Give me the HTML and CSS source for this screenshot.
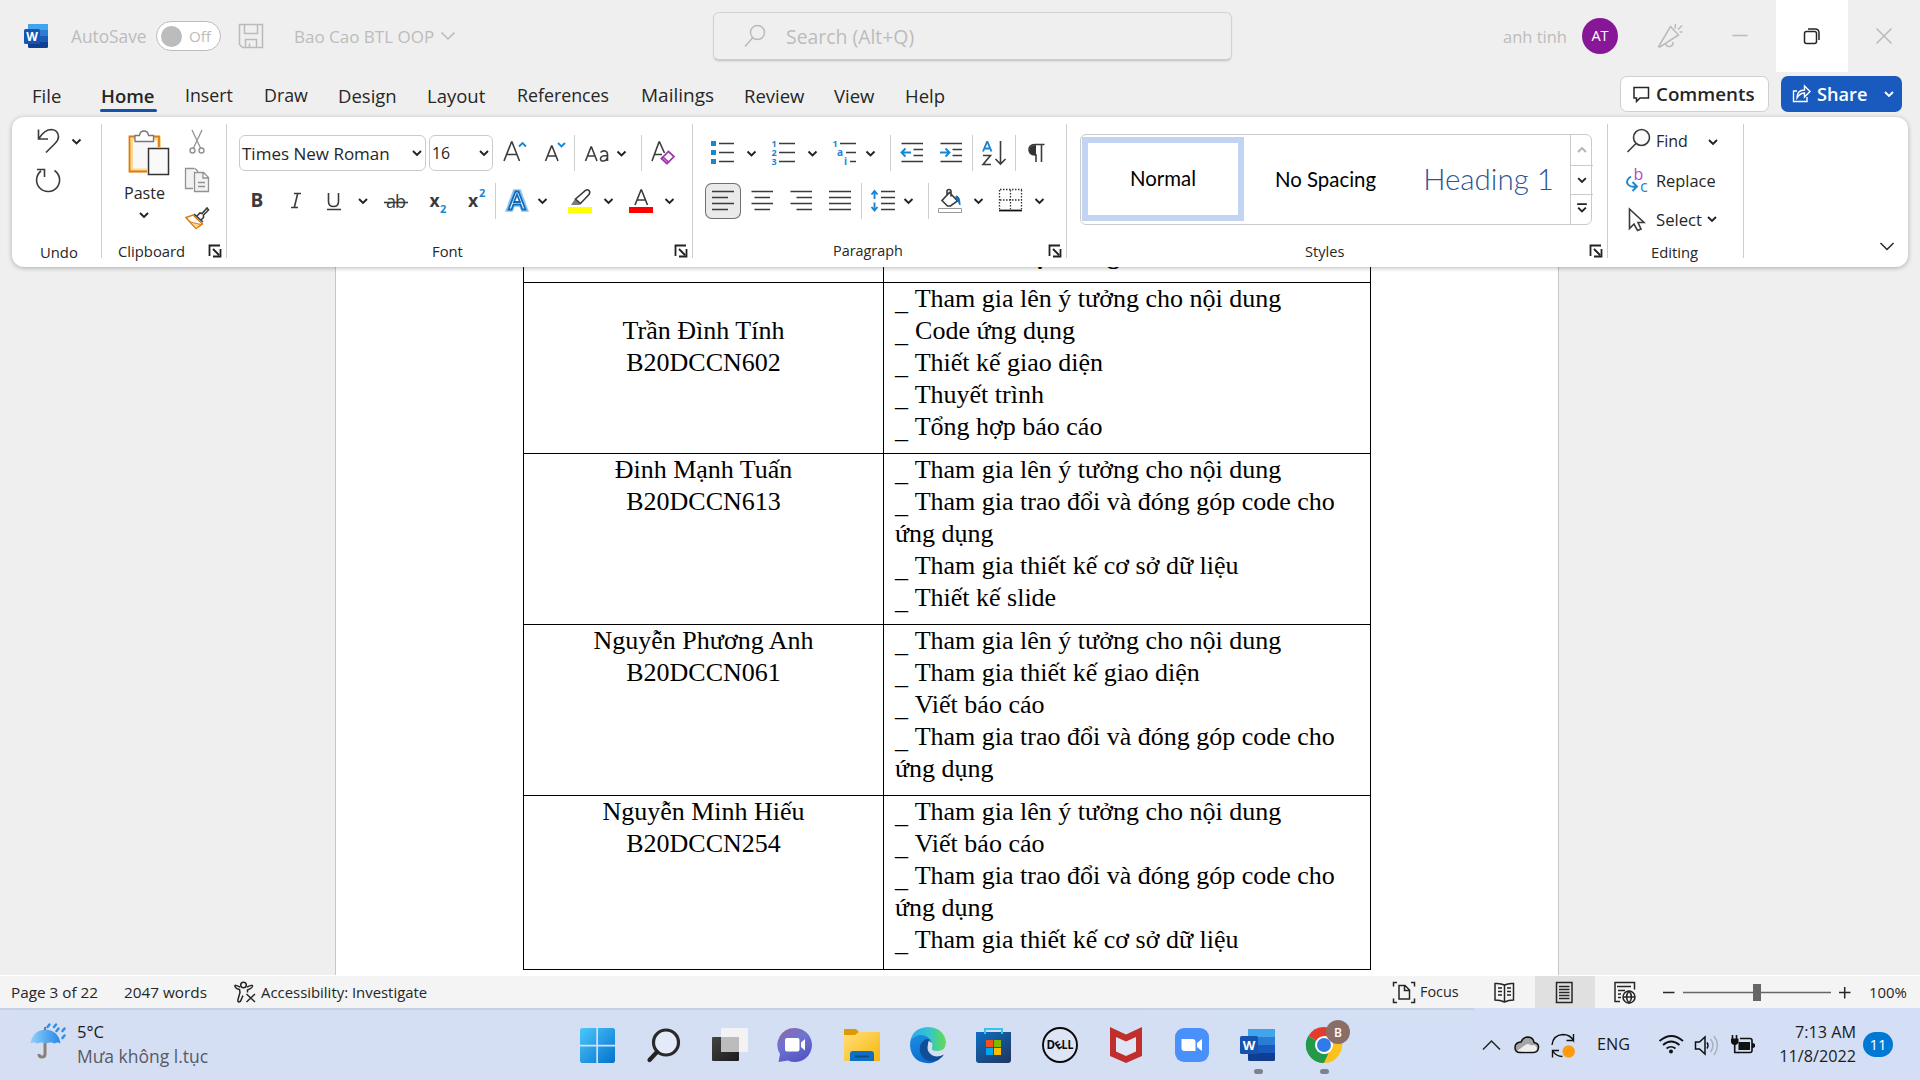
FILE: index.html
```html
<!DOCTYPE html>
<html lang="en">
<head>
<meta charset="utf-8">
<title>Bao Cao BTL OOP - Word</title>
<link rel="stylesheet" href="styles.css">
</head>
<body>
<header class="titlebar">
  <svg class="ico" width="24" height="24" viewBox="0 0 24 24"><rect x="4" width="20" height="24" rx="1.5" fill="#103f91"/><path d="M4 1.5Q4 0 5.500 0H22.500Q24 0 24 1.500V6H4z" fill="#41a5ee"/><path d="M4 6h20v6H4z" fill="#2b7cd3"/><path d="M4 12h20v6H4z" fill="#185abd"/><rect y="5" width="16" height="15" rx="1.500" fill="#1755b4"/><text x="8" y="16.500" class="w-letter" font-size="12">W</text></svg>
  <span class="autosave">AutoSave</span>
  <span class="toggle"><i class="knob"></i>Off</span>
  <svg class="ico save" width="26" height="26" viewBox="238 23 26 26"><path d="M239.500 24.500h23v23h-20l-3-3zM244.500 24.500v9h13v-9M245.500 47.500v-8h11v8M249.500 47.500v-4" class="g"/></svg>
  <span class="filename">Bao Cao BTL OOP</span>
  <svg class="ico" width="18" height="12" viewBox="439 30 18 12"><path d="M441.500 32.500l6.500 6.500 6.500-6.500" class="g"/></svg>
  <div class="search">
    <svg class="ico" width="24" height="26" viewBox="744 23 24 26"><circle cx="757.500" cy="32.500" r="7" class="g"/><path d="M752.500 38L745 46.500" class="g"/></svg>
    <span>Search (Alt+Q)</span>
  </div>
  <span class="user">anh tinh</span>
  <span class="avatar">AT</span>
  <svg class="ico pen" width="28" height="28" viewBox="1656 22 28 28"><path d="M1659 46l11.500-19.500 8 8.500-18.500 12q-2.500 0-1-1zM1666 44q.5 3 4 2.500 3.500-1 3-4.500M1675 28.500l.5-4.500M1678 29.500l4-4M1679.500 32h3" class="g"/></svg>
  <div class="winbtns">
    <svg width="72" height="72" viewBox="1704 0 72 72"><path d="M1732.500 35.500h15" class="g"/></svg>
    <svg class="hot" width="72" height="72" viewBox="1776 0 72 72"><rect x="1804.500" y="31.500" width="12" height="12" rx="2" class="k2"/><path d="M1808 29h7q4 0 4 4v7" class="k2"/></svg>
    <svg width="72" height="72" viewBox="1848 0 72 72"><path d="M1876.500 28.500l15 15m0-15l-15 15" class="g"/></svg>
  </div>
</header>

<nav class="tabs">
  <div class="tablist">
    <span>File</span><span class="active">Home</span><span class="n">Insert</span><span class="n">Draw</span><span>Design</span><span>Layout</span><span class="n">References</span><span class="wd">Mailings</span><span>Review</span><span>View</span><span>Help</span>
  </div>
  <div class="btn comments"><svg width="18" height="18" viewBox="1632 84 18 18"><path d="M1634 86.500h14.500v10.500h-8.500l-3.500 3.500V97h-2.500z" class="k2"/></svg>Comments</div>
  <div class="btn share"><svg width="20" height="20" viewBox="1791 85 20 20"><path d="M1797 92h-3.500v10.500h13.500V98" class="w1"/><path d="M1797 99q0-8 7.500-8v-4l5.500 5.500-5.500 5.500v-4q-4.500 0-7.500 5z" class="w1"/></svg>Share<svg class="sc" width="12" height="12" viewBox="0 0 12 12"><path d="M2 4l4 4 4-4" class="w2"/></svg></div>
</nav>

<section class="ribbon">
  <div class="group undo">
    <div class="body">
      <svg width="60" height="40" viewBox="32 120 60 40"><path d="M38.500 129.500v9.500h9.500M38.500 139q6-9.500 13-9.500 6.500.5 7 7 0 3.500-3.500 7L46 152.500" class="k"/><path d="M72.500 139.500l4 4 4-4" class="c"/></svg>
      <svg width="60" height="40" viewBox="32 160 60 40"><path d="M37 169.500h7.500v7.500M41 171a11.500 11.500 0 1 0 13.500-.5" class="k"/></svg>
    </div>
    <div class="label"><span>Undo</span></div>
  </div>

  <div class="group clip">
    <div class="body">
      <div class="paste">
        <svg width="50" height="52" viewBox="124 126 50 52"><path d="M129.500 137.500h29v33h-29z" fill="#f8f8f8"/><path d="M131 138.500v32h16M132 138.500h27v9" fill="none" stroke="#fbd98f" stroke-width="4"/><path d="M147 171.500h-17.500v-35h6M154 136.500h5V147" fill="none" stroke="#e07a10" stroke-width="1.800"/><path d="M135 141.500v-6h4.500q.5-4.500 4.500-4.500t4.500 4.500h5v6z" fill="#fff" stroke="#777" stroke-width="1.300"/><path d="M148.500 148.500h20v26h-20z" fill="#f9f9f9" stroke="#333" stroke-width="1.500"/></svg>
        <span>Paste</span>
        <svg width="14" height="10" viewBox="137 210 14 10"><path d="M140 213l4 4 4-4" class="c"/></svg>
      </div>
      <div class="col">
        <svg width="30" height="36" viewBox="182 124 30 36"><path d="M192 130l9 19M202 130l-9 19" stroke="#929292" stroke-width="1.300" fill="none"/><circle cx="192.500" cy="150.500" r="2.500" class="gg"/><circle cx="201.500" cy="150.500" r="2.500" class="gg"/></svg>
        <svg width="30" height="39" viewBox="182 160 30 39"><path d="M193 188.500h-7.500v-20h9M195 168.500l3 3M194.500 172.500h9l5 5v14h-14zM203 173v5h5.500M198 182.500h7M198 186.500h7" fill="#f2f2f2" stroke="#929292" stroke-width="1.300"/></svg>
        <svg width="30" height="36" viewBox="182 199 30 36"><path d="M186 217.500l7-2.500 9.500 9-6.500 4.500z" fill="#fff" stroke="#e07a10" stroke-width="1.500"/><path d="M190 222l11 2.500-5 4z" fill="#fbd98f" stroke="#e07a10"/><path d="M194 214l9 8M197 216l3-3 2 .5 5-5.500 1.500 2-5 5v2.500l-3 3" class="k"/></svg>
      </div>
    </div>
    <div class="label"><span>Clipboard</span><svg class="launch" width="14" height="14" viewBox="0 0 14 14"><path d="M1.500 12V1.500H12M5 5l6 6M12.500 5v7.500H5" class="l"/></svg></div>
  </div>

  <div class="group font">
    <div class="body rows">
      <div class="row">
        <div class="combo face"><span>Times New Roman</span><svg width="14" height="10" viewBox="0 0 14 10"><path d="M3 3l4 4 4-4" class="c"/></svg></div>
        <div class="combo size"><span>16</span><svg width="14" height="10" viewBox="0 0 14 10"><path d="M3 3l4 4 4-4" class="c"/></svg></div>
        <svg width="42" height="36" viewBox="493 135 42 36"><path d="M504 161l7.500-19h.5l7.500 19M506.500 154.500h10.500" class="k"/><path d="M519 146.500l3.500-3.500 3.500 3.500" class="b"/></svg>
        <svg width="39" height="36" viewBox="535 135 39 36"><path d="M545.500 161l6-15h.5l6 15M547.500 156h8.500" class="k"/><path d="M558 143l3.500 3.500 3.500-3.500" class="b"/></svg>
        <i class="sep"></i>
        <svg width="66" height="36" viewBox="575 135 66 36"><path d="M585.500 161l5.500-14h.5l5.500 14M587.500 156h7.500M600.500 152.500q2-2 4.500-1.500 2.500.5 2.500 3.500v6.500M607.500 155.500q-7 0-7 3t3 2.500q4-.5 4-5" class="k"/><path d="M617.500 151.500l4 4 4-4" class="c"/></svg>
        <i class="sep"></i>
        <svg width="40" height="36" viewBox="642 135 40 36"><path d="M652 161l7-19h.5l5 11M654 154.500h8" class="k"/><path d="M661.500 158.500l7-7 5.500 5-7 7z" fill="#fff" stroke="#9b35a8" stroke-width="1.700"/><path d="M661.500 158.500l1.500-1.500 5.500 5-1.500 1.500z" fill="#d9a6df" stroke="#9b35a8" stroke-width="1.500"/></svg>
      </div>
      <div class="row">
        <svg width="36" height="36" viewBox="239 183 36 36"><text x="250.500" y="207" class="t bold" font-size="19">B</text></svg>
        <svg width="38" height="36" viewBox="275 183 38 36"><path d="M294 193.500h7M291 207.500h7M297.700 193.500l-3.400 14" class="k"/></svg>
        <svg width="64" height="36" viewBox="313 183 64 36"><path d="M328.500 193v8.500q0 5 5 5t5-5V193M327 209.500h14" class="k"/><path d="M359 199l4 4 4-4" class="c"/></svg>
        <svg width="43" height="36" viewBox="377 183 43 36"><text x="386" y="208" class="t" font-size="18" textLength="20">ab</text><path d="M384 202.500h24" class="k"/></svg>
        <svg width="38" height="36" viewBox="420 183 38 36"><text x="429.500" y="207" class="t bold" font-size="17.500">x</text><text x="440" y="213" class="t sub" font-size="11">2</text></svg>
        <svg width="37" height="36" viewBox="458 183 37 36"><text x="468" y="207" class="t bold" font-size="17.500">x</text><text x="479" y="197" class="t sub" font-size="11">2</text></svg>
        <i class="sep"></i>
        <svg width="62" height="36" viewBox="496 183 62 36"><path d="M507.500 210l7-19h5l7 19h-4l-2-5h-7l-2 5z" fill="none" stroke="#8ec5ef" stroke-width="3.500"/><path d="M508.500 209.500l7-18h3l7 18h-3l-2-5h-7l-2 5zM514 202h6l-3-7.500z" fill="#fff" stroke="#0f6cbd" stroke-width="1.800"/><path d="M538.500 199l4 4 4-4" class="c"/></svg>
        <svg width="62" height="36" viewBox="558 183 62 36"><path d="M568 207h24v6h-24z" fill="#ff0"/><path d="M571 205l4-6 6 5-2 1z" fill="#7a7a7a"/><path d="M575.500 199l10-8.500q2-1.500 3.500 0t0 4l-8.500 9z" class="k"/><path d="M604.500 199l4 4 4-4" class="c"/></svg>
        <svg width="62" height="36" viewBox="620 183 62 36"><path d="M629 207h24v6h-24z" fill="#f00"/><path d="M635 205l6-15h.5l6 15M637 200h8.500" class="k"/><path d="M665.500 199l4 4 4-4" class="c"/></svg>
      </div>
    </div>
    <div class="label"><span>Font</span><svg class="launch" width="14" height="14" viewBox="0 0 14 14"><path d="M1.500 12V1.500H12M5 5l6 6M12.500 5v7.500H5" class="l"/></svg></div>
  </div>

  <div class="group para">
    <div class="body rows">
      <div class="row">
        <svg width="60" height="36" viewBox="705 135 60 36"><path d="M711 141h5v5h-5zM711 150h5v5h-5zM711 159h5v5h-5z" fill="#1a86d0"/><path d="M719 143.500h15M719 152.500h15M719 161.500h15" class="k"/><path d="M747.500 151.500l4 4 4-4" class="c"/></svg>
        <svg width="61" height="36" viewBox="765 135 61 36"><text x="771.500" y="147" class="t sub" font-size="9">1</text><text x="771.500" y="156" class="t sub" font-size="9">2</text><text x="771.500" y="165" class="t sub" font-size="9">3</text><path d="M779 143.500h16M779 152.500h16M779 161.500h16" class="k"/><path d="M808.500 151.500l4 4 4-4" class="c"/></svg>
        <svg width="64" height="36" viewBox="826 135 64 36"><text x="832.500" y="147" class="t sub" font-size="9">1</text><text x="837" y="156" class="t sub" font-size="10">a</text><text x="844" y="165" class="t sub" font-size="10">i</text><path d="M840 143.500h16M846 152.500h10M850 161.500h6" class="k"/><path d="M866.500 151.500l4 4 4-4" class="c"/></svg>
        <i class="sep"></i>
        <svg width="40" height="36" viewBox="891 135 40 36"><path d="M901.500 143.500h21.500M913.500 149.500h9.500M913.500 155.500h9.500M901.500 161.500h21.500" class="k"/><path d="M911 152.500h-9M905.500 148.500l-4 4 4 4" class="b"/></svg>
        <svg width="41" height="36" viewBox="931 135 41 36"><path d="M940.500 143.500h21.500M952.500 149.500h9.500M952.500 155.500h9.500M940.500 161.500h21.500" class="k"/><path d="M940 152.500h9M945.500 148.500l4 4-4 4" class="b"/></svg>
        <i class="sep"></i>
        <svg width="42" height="36" viewBox="973 135 42 36"><path d="M983 151.500l4-9.500h.5l4 9.500M984.500 148.500h5.500" class="b"/><path d="M983 155.500h7.500l-7.500 9h8M1000.500 141v23M995.500 159l5 5 5-5" class="k"/></svg>
        <i class="sep"></i>
        <svg width="40" height="36" viewBox="1016 135 40 36"><path d="M1044.500 144.500h-9q-6.500 0-6.500 5t6 5.500h1v7M1041.500 144.500v17.500" class="k"/><path d="M1036 145v10q-6.500 0-6.500-5t6.500-5z" fill="#333"/></svg>
      </div>
      <div class="row">
        <svg class="on" width="36" height="36" viewBox="705 183 36 36"><path d="M712 191.500h22M712 197.500h16M712 203.500h22M712 209.500h16" class="k"/></svg>
        <svg width="40" height="36" viewBox="741 183 40 36"><path d="M751.500 191.500h21.500M754.500 197.500h15.500M751.500 203.500h21.500M754.500 209.500h15.500" class="k"/></svg>
        <svg width="39" height="36" viewBox="781 183 39 36"><path d="M790.500 191.500h21.500M796.500 197.500h15.500M790.500 203.500h21.500M796.500 209.500h15.500" class="k"/></svg>
        <svg width="41" height="36" viewBox="820 183 41 36"><path d="M829 191.500h22M829 197.500h22M829 203.500h22M829 209.500h22" class="k"/></svg>
        <i class="sep"></i>
        <svg width="66" height="36" viewBox="862 183 66 36"><path d="M881 191.500h14M881 197.500h14M881 203.500h14M881 209.500h14" class="k"/><path d="M874.500 191v8M871.500 194.500l3-3.500 3 3.500M874.500 202.500v8M871.500 207l3 3.500 3-3.500" class="b"/><path d="M904.500 199l4 4 4-4" class="c"/></svg>
        <i class="sep"></i>
        <svg width="62" height="36" viewBox="929 183 62 36"><path d="M949.500 192.500l8 8.500-7 5h-3l-5.500-5.500zM947 195v-3.500q0-2 2-2t2 2v5" class="k"/><path d="M956 196q4 0 4 9-2-5-4-6z" fill="#0f6cbd" stroke="#0f6cbd"/><path d="M938.500 208.500h23v4h-23z" fill="#fff" stroke="#999"/><path d="M974.500 199l4 4 4-4" class="c"/></svg>
        <svg width="65" height="36" viewBox="991 183 65 36"><path d="M999.500 190v19M1010.500 190v19M1021.500 190v19M1000 189.500h22M1000 200h22" fill="none" stroke="#333" stroke-width="1.300" stroke-dasharray="1.500 1.500"/><path d="M999 210.500h23" stroke="#111" stroke-width="1.800"/><path d="M1035.500 199l4 4 4-4" class="c"/></svg>
      </div>
    </div>
    <div class="label"><span>Paragraph</span><svg class="launch" width="14" height="14" viewBox="0 0 14 14"><path d="M1.500 12V1.500H12M5 5l6 6M12.500 5v7.500H5" class="l"/></svg></div>
  </div>

  <div class="group styles">
    <div class="body">
      <div class="gallery">
        <div class="style sel">Normal</div>
        <div class="style nosp">No Spacing</div>
        <div class="style head">Heading 1</div>
        <div class="scroll">
          <svg width="22" height="30" viewBox="0 0 22 30"><path d="M7 17l4-4 4 4" class="g3"/></svg>
          <svg width="22" height="29" viewBox="0 0 22 29"><path d="M7 12.500l4 4 4-4" class="c"/></svg>
          <svg width="22" height="29" viewBox="0 0 22 29"><path d="M6 9.500h10M7 13l4 4 4-4" class="c"/></svg>
        </div>
      </div>
    </div>
    <div class="label"><span>Styles</span><svg class="launch" width="14" height="14" viewBox="0 0 14 14"><path d="M1.500 12V1.500H12M5 5l6 6M12.500 5v7.500H5" class="l"/></svg></div>
  </div>

  <div class="group edit">
    <div class="body">
      <div class="cmd"><svg width="30" height="39" viewBox="1625 122 30 39"><circle cx="1641.500" cy="137.500" r="8" fill="#fafafa" stroke="#3b3b3b" stroke-width="1.600"/><path d="M1636 143.500l-8.500 8.500" class="k"/></svg><span class="find">Find</span><svg width="14" height="10" viewBox="0 0 14 10"><path d="M3 3l4 4 4-4" class="c"/></svg></div>
      <div class="cmd"><svg width="30" height="39" viewBox="1625 161 30 39"><text x="1633.500" y="180" class="t rb" font-size="16">b</text><text x="1640" y="192" class="t rc" font-size="16">c</text><path d="M1631 176.500q-6 4-3 8 2.500 3 8 2M1632.500 182l4.500 4.500-4.500 4.500" class="b"/></svg><span>Replace</span></div>
      <div class="cmd"><svg width="30" height="39" viewBox="1625 200 30 39"><path d="M1629.500 209v19.500l4.500-4.500 3.500 6.500 3.500-1.500-3-6.500h6z" class="k"/></svg><span class="select">Select</span><svg width="14" height="12" viewBox="0 0 14 12"><path d="M3 3l4 4 4-4" class="c"/></svg></div>
    </div>
    <div class="label"><span>Editing</span></div>
  </div>
  <svg class="collapse" width="20" height="14" viewBox="1876 239 20 14"><path d="M1879.500 243l6.500 6.500 6.500-6.500" class="k2"/></svg>
</section>

<main class="doc">
  <div class="page">
    <table class="work">
      <tr class="hd"><th><div></div></th><th><div><b>Nội dung</b></div></th></tr>
      <tr><td class="who"><br>Trần Đình Tính<br>B20DCCN602</td><td><u>_</u> Tham gia lên ý tưởng cho nội dung<br><u>_</u> Code ứng dụng<br><u>_</u> Thiết kế giao diện<br><u>_</u> Thuyết trình<br><u>_</u> Tổng hợp báo cáo</td></tr>
      <tr><td class="who">Đinh Mạnh Tuấn<br>B20DCCN613</td><td><u>_</u> Tham gia lên ý tưởng cho nội dung<br><u>_</u> Tham gia trao đổi và đóng góp code cho<br>ứng dụng<br><u>_</u> Tham gia thiết kế cơ sở dữ liệu<br><u>_</u> Thiết kế slide</td></tr>
      <tr><td class="who">Nguyễn Phương Anh<br>B20DCCN061</td><td><u>_</u> Tham gia lên ý tưởng cho nội dung<br><u>_</u> Tham gia thiết kế giao diện<br><u>_</u> Viết báo cáo<br><u>_</u> Tham gia trao đổi và đóng góp code cho<br>ứng dụng</td></tr>
      <tr class="last"><td class="who">Nguyễn Minh Hiếu<br>B20DCCN254</td><td><u>_</u> Tham gia lên ý tưởng cho nội dung<br><u>_</u> Viết báo cáo<br><u>_</u> Tham gia trao đổi và đóng góp code cho<br>ứng dụng<br><u>_</u> Tham gia thiết kế cơ sở dữ liệu</td></tr>
    </table>
  </div>
</main>

<footer class="status">
  <span class="pg">Page 3 of 22</span>
  <span class="words">2047 words</span>
  <svg width="26" height="26" viewBox="232 979 26 26"><circle cx="243.500" cy="985" r="2.800" class="k2"/><path d="M240 987q-6-3-5-.5t4.500 3l.5 3-2 7q-.5 2.500 1 2.500t2.500-3l1.500-3.500M247 987q6-3 5.500-.5-1 2-5 3.500v2.500M246.500 994l8.500 8M255 994l-8.500 8" class="k2"/></svg>
  <span class="acc">Accessibility: Investigate</span>
  <svg width="26" height="26" viewBox="1391 979 26 26"><path d="M1397 982.500h-3.500v4M1411 982.500h3.500v4M1397 1002.500h-3.500v-4M1411 1002.500h3.500v-4M1399 985.500h6l4.500 4.500v9h-10.500zM1404.500 985.500v5h5" class="k2"/></svg>
  <span class="focus">Focus</span>
  <div class="views">
    <svg width="60" height="32" viewBox="1475 976 60 32"><path d="M1504.500 985q-4-2-9.500-1.500v16.500q5.500 0 9.500 2 4-2 9-2v-16.500q-5-.5-9 1.500zM1504.500 985v17M1498 988h4M1498 991.500h4M1498 995h4M1507 988h4M1507 991.500h4M1507 995h4" class="k2"/></svg>
    <svg class="cur" width="60" height="32" viewBox="1535 976 60 32"><path d="M1556.500 982.500h15.500v20h-15.500zM1559 986.500h10.500M1559 989.500h10.500M1559 992.500h10.500M1559 995.500h10.500M1559 998.500h10.500" class="k2"/></svg>
    <svg width="60" height="32" viewBox="1595 976 60 32"><path d="M1620 1001.500h-5v-19h19.500v7M1617 986.500h14M1618 990.500h7M1618 994h3M1618 997.500h3" class="k2"/><circle cx="1629" cy="997" r="6" class="k2"/><path d="M1623 997h12M1629 991q-5 6 0 12 5-6 0-12" class="k2"/></svg>
  </div>
  <svg class="zoom" width="200" height="32" viewBox="1655 976 200 32"><path d="M1663 992.500h11.500M1839 992.500h11.500M1844.700 987v11.500" class="k2"/><path d="M1683 992.500h148" stroke="#666" stroke-width="1.700"/><path d="M1753 984h8v17h-8z" fill="#666"/></svg>
  <span class="pct">100%</span>
</footer>

<footer class="taskbar">
  <div class="weather">
    <svg width="38" height="40" viewBox="29 1025 38 40"><defs><linearGradient id="um"><stop stop-color="#8fd0fb"/><stop offset="1" stop-color="#2688e8"/></linearGradient></defs><path d="M45 1048v11q0 3-3 3t-3-3" fill="none" stroke="#8a8078" stroke-width="3"/><path d="M30.500 1048.500q2-13 15-14 13 1 15 14-3-2-6 0-3-2-9 0-5-2-8 0-4-2-7 0z" fill="url(#um)"/><path d="M45 1032v3" stroke="#777" stroke-width="2"/><path d="M47.500 1032l2-2.500M54 1032l2-2.500M56.500 1036l2-2.500M62.500 1036l2-2.500M62.500 1043l2-2.500" stroke="#2d8fe8" stroke-width="2.500" stroke-linecap="round"/></svg>
    <div><p class="temp">5°C</p><p class="desc">Mưa không l.tục</p></div>
  </div>
  <div class="apps">
    <svg width="66" height="72" viewBox="564 1008 66 72"><defs><linearGradient id="wi" x2="1" y2="1" gradientUnits="objectBoundingBox"><stop stop-color="#4cc8fb"/><stop offset="1" stop-color="#0471cd"/></linearGradient></defs><path d="M581.500 1028H596.300v16.800H580v-15.300zM598 1028h15.500l1.500 1.500v15.300h-17zM580 1046.500h16.300v16.500h-14.800l-1.500-1.500zM598 1046.500h17v15l-1.500 1.500H598z" fill="url(#wi)"/></svg>
    <svg width="66" height="72" viewBox="630 1008 66 72"><circle cx="666" cy="1042.500" r="12.500" fill="#e4eaf7" stroke="#2b2929" stroke-width="3.200"/><path d="M657 1052l-7.500 8" stroke="#222" stroke-width="4.200" stroke-linecap="round"/></svg>
    <svg width="66" height="72" viewBox="696 1008 66 72"><defs><linearGradient id="tv" x2="1" y2="1"><stop stop-color="#444"/><stop offset="1" stop-color="#1b1b1b"/></linearGradient></defs><rect x="712" y="1037" width="27" height="24" rx="1" fill="url(#tv)"/><rect x="721" y="1028" width="27" height="24" rx="1" fill="#f3f3f3"/><path d="M721 1037h18v15h-18z" fill="#bcbcbc"/></svg>
    <svg width="66" height="72" viewBox="762 1008 66 72"><defs><linearGradient id="ch" x1=".2" x2=".7" y2="1"><stop stop-color="#8a67ab"/><stop offset=".4" stop-color="#6f74d0"/><stop offset="1" stop-color="#5353c4"/></linearGradient></defs><path d="M795 1028a17 17 0 1 1-7 32.500l-9.500 1.500 1.500-8a17 17 0 0 1 15-26z" fill="url(#ch)"/><rect x="785" y="1038" width="14.500" height="13.500" rx="2" fill="#fff"/><path d="M801 1042.500l4-3.500v11.500l-4-3.500z" fill="#fff"/></svg>
    <svg width="66" height="72" viewBox="828 1008 66 72"><defs><linearGradient id="fo" x2="1" y2="1"><stop stop-color="#ffe07a"/><stop offset="1" stop-color="#f8b50c"/></linearGradient></defs><path d="M844 1030q0-1 1-1h11l3 3-4 5h-11z" fill="#dd9a05"/><path d="M844 1035h11l4-3h20q1 0 1 1v28h-36z" fill="url(#fo)"/><path d="M850 1061v-7q0-3 3-3h18q3 0 3 3v7z" fill="#0d70c4"/><path d="M855 1056.500h14" stroke="#0a4a86" stroke-width="1.800"/></svg>
    <svg width="66" height="72" viewBox="894 1008 66 72"><defs><linearGradient id="eg"><stop stop-color="#2fa9ee"/><stop offset=".5" stop-color="#32c3d4"/><stop offset="1" stop-color="#62dd4c"/></linearGradient><linearGradient id="eb" x2=".4" y2="1"><stop stop-color="#1b8fe0"/><stop offset="1" stop-color="#0a6bd0"/></linearGradient></defs><path d="M910 1044q1-16 18-17 16 1 18 15 0 9-9 9-6 0-5-3 2-6-4-8-9-5-18 4z" fill="url(#eg)"/><path d="M910 1045q0-8 9-10 9-1 13 8-6-5-9 2-1 8 3 12 6 5 13 2-5 5-13 4-15-2-16-18z" fill="url(#eb)"/><path d="M926 1039q-8 5-6 13 3 9 12 9.500 8-.5 12-7-8 4-13 0-5-4-3-10 0-4 2-5z" fill="#104f98"/></svg>
    <svg width="66" height="72" viewBox="960 1008 66 72"><defs><linearGradient id="st" x2=".8" y2="1"><stop stop-color="#0d6fc4"/><stop offset="1" stop-color="#1f3a66"/></linearGradient></defs><path d="M976 1032h35v28q0 3-3 3h-29q-3 0-3-3z" fill="url(#st)"/><path d="M985 1034v-5h17v5" fill="none" stroke="#33c4f5" stroke-width="2"/><path d="M986 1040h7v7h-7z" fill="#f25022"/><path d="M994 1040h7v7h-7z" fill="#7fba00"/><path d="M986 1048h7v7h-7z" fill="#00a4ef"/><path d="M994 1048h7v7h-7z" fill="#ffb900"/></svg>
    <svg width="66" height="72" viewBox="1026 1008 66 72"><circle cx="1060" cy="1045" r="17" fill="#dce4f5" stroke="#0a0a0a" stroke-width="1.900"/><text x="1046.500" y="1049" class="dell" font-size="11.500">D</text><text x="1061.500" y="1049" class="dell" font-size="11.500" textLength="12" lengthAdjust="spacingAndGlyphs">LL</text><text x="-3.500" y="4" class="dell" font-size="11" transform="translate(1058.500 1045) rotate(-35)">E</text></svg>
    <svg width="66" height="72" viewBox="1092 1008 66 72"><path d="M1110 1027l16 7.500 16-7.500v29l-16 7-16-7z" fill="#c02f2c"/><path d="M1116 1037l10 4.500 10-4.500v14.500l-10 4.500-10-4.500z" fill="#dfe5f4"/></svg>
    <svg width="66" height="72" viewBox="1158 1008 66 72"><rect x="1175" y="1028" width="34" height="34" rx="9" fill="#4a90fb"/><path d="M1181.500 1039h11q3 0 3 3v9h-11q-3 0-3-3zM1197 1043l5-4v12l-5-4z" fill="#fff"/></svg>
    <svg width="66" height="72" viewBox="1224 1008 66 72"><rect x="1248" y="1029" width="27" height="32" rx="1.500" fill="#103f91"/><path d="M1248 1029h27v8h-27z" fill="#41a5ee"/><path d="M1248 1037h27v8h-27z" fill="#2b7cd3"/><path d="M1248 1045h27v8h-27z" fill="#185abd"/><rect x="1240" y="1036" width="18" height="18" rx="1.500" fill="#1553b0"/><text x="1249" y="1049.500" class="w-letter" font-size="13">W</text><rect x="1254" y="1069" width="9" height="5" rx="2.500" fill="#7d828c"/></svg>
    <svg width="66" height="72" viewBox="1290 1008 66 72"><path d="M1324 1045L1308.400 1036a18 18 0 0 1 31.200 0z" fill="#e33b2e"/><path d="M1324 1045l-15.600-9a18 18 0 0 0 15.600 27z" fill="#24994a"/><path d="M1324 1045v-9h15.600a18 18 0 0 1-15.600 27l-5-4z" fill="#fcc21b"/><path d="M1308.400 1036l8 13.500q4 6 12 4l-4.500 9.500a18 18 0 0 1-15.500-27z" fill="#24994a"/><circle cx="1324" cy="1045" r="9" fill="#fff"/><circle cx="1324" cy="1045" r="7" fill="#2f7bea"/><circle cx="1338" cy="1032" r="12" fill="#8a6e66"/><text x="1338" y="1036.500" class="bdg" font-size="12">B</text><rect x="1320" y="1069" width="9" height="5" rx="2.500" fill="#7d828c"/></svg>
  </div>
  <div class="tray">
    <svg width="32" height="40" viewBox="1474 1025 32 40"><path d="M1483 1050.500l8.500-8.500 8.500 8.500" class="k2"/></svg>
    <svg width="38" height="40" viewBox="1506 1025 38 40"><path d="M1520 1053.500q-5 0-5-5t6-5.500q2-5 7-5 5.500.5 6 5.500 5 1 4.500 5-.5 5-5 5z" fill="#a5a5a5" stroke="#111" stroke-width="1.500"/><path d="M1517 1052q5 1 17 .5 4-1 2.500-4.500-2-3-5-1.500-4-3-7 0z" fill="#eee"/></svg>
    <svg width="42" height="40" viewBox="1544 1025 42 40"><path d="M1552 1046q1-10 11-10.500 7 0 10.500 6V1035M1573.500 1041.500h-7M1552.500 1058.500v-7h6.500M1552.500 1051.500q3.500 6 10 6" fill="none" stroke="#111" stroke-width="1.400"/><circle cx="1568.700" cy="1052.500" r="6.200" fill="#ff9a0b"/></svg>
    <span class="eng">ENG</span>
    <svg width="100" height="40" viewBox="1656 1025 100 40"><path d="M1659.500 1042q12-10 23.500 0M1663 1046q8-7 16.500 0M1666.500 1049.500q4.500-3.500 9 0" fill="none" stroke="#111" stroke-width="1.700"/><circle cx="1671" cy="1052.500" r="2" fill="#111"/><path d="M1695.500 1043h4l5.500-5v17l-5.500-5h-4zM1707 1043.500q2 3 0 6" fill="none" stroke="#111" stroke-width="1.500"/><path d="M1710.500 1040q5 6 0 13M1714 1037q7 9 0 19" fill="none" stroke="#a9b1c1" stroke-width="1.500"/><path d="M1740 1039.500h10q2 0 2 2v10q0 2-2 2h-12" fill="none" stroke="#111" stroke-width="1.600"/><path d="M1738.500 1043h11.500v8h-11.500zM1752 1043.500l3 1.500v3l-3 1.500zM1731 1039.500h7.500v3.500q-1 3-3.500 3-3.500 0-4-3z" fill="#111"/><path d="M1732.500 1036v4M1736.500 1036v4M1734.700 1045v8.500h4" fill="none" stroke="#111" stroke-width="1.600"/></svg>
    <div class="clock"><p class="time">7:13 AM</p><p class="date">11/8/2022</p></div>
    <span class="notif">11</span>
  </div>
</footer>
</body>
</html>
```
FILE: styles.css
```css
* { box-sizing: border-box; }
body {
  margin: 0; width: 1920px; height: 1080px; overflow: hidden;
  display: flex; flex-direction: column;
  background: #efefef; color: #262626;
  font-family: "Open Sans", "Noto Sans", sans-serif; font-size: 16.4px;
}
svg { display: block; flex: none; }
p { margin: 0; }
span { white-space: nowrap; }

/* stroke styles shared by the icons */
.k { fill: none; stroke: #3b3b3b; stroke-width: 1.6; }
.k2 { fill: none; stroke: #262626; stroke-width: 1.5; }
.c { fill: none; stroke: #222; stroke-width: 1.9; }
.l { fill: none; stroke: #222; stroke-width: 1.8; }
.b { fill: none; stroke: #1a86d0; stroke-width: 1.9; }
.g { fill: none; stroke: #bababa; stroke-width: 1.5; }
.g3 { fill: none; stroke: #b4b4b4; stroke-width: 1.9; }
.gg { fill: none; stroke: #929292; stroke-width: 1.4; }
.w1 { fill: none; stroke: #fff; stroke-width: 1.4; }
.w2 { fill: none; stroke: #fff; stroke-width: 1.9; }
.t { fill: #3b3b3b; }
.bold { font-weight: 700; }
.sub { fill: #1a86d0; font-weight: 700; }
.rb { fill: #b146c2; }
.rc { fill: #1a86d0; }
.w-letter, .bdg { fill: #fff; font-weight: 700; text-anchor: middle; }
.bdg { font-weight: 600; }
.dell { fill: #0a0a0a; font-weight: 700; }

/* title bar */
.titlebar { height: 72px; flex: none; display: flex; align-items: center; padding-left: 24px; color: #bcbcbc; font-size: 17.3px; }
.autosave { width: 76px; margin-left: 23px; }
.toggle { width: 65px; height: 30px; margin-left: 9px; border: 1px solid #bcbcbc; border-radius: 15px; background: #fff; display: flex; align-items: center; font-size: 15.2px; }
.knob { width: 21px; height: 21px; border-radius: 50%; background: #bcbcbc; margin: 0 7px 0 4px; }
.save { margin-left: 17px; }
.filename { margin-left: 30px; width: 140px; font-size: 17px; }
.filename + svg { margin-left: 5px; }
.search { margin-left: 256px; width: 519px; height: 49px; border: 1px solid #d2d2d2; border-bottom: 2px solid #cbcbcb; border-radius: 6px; display: flex; align-items: center; padding-left: 30px; font-size: 19.4px; box-shadow: 0 1px 2px rgba(0,0,0,.08); }
.search span { margin: 1px 0 0 18px; }
.user { margin-left: 271px; width: 63px; font-size: 16.5px; }
.avatar { margin-left: 16px; width: 36px; height: 36px; border-radius: 50%; background: #881798; color: #fff; font-size: 14.5px; line-height: 36px; text-align: center; }
.pen { margin-left: 38px; }
.winbtns { display: flex; margin-left: 20px; }
.hot { background: #fff; }

/* tab strip */
.tabs { height: 45px; flex: none; display: flex; align-items: flex-start; padding-top: 4px; }
.tablist { flex: 1; display: grid; grid-template-columns: 69px 84px 79px 74px 89px 90px 124px 103px 90px 71px 60px; padding: 4px 0 0 32px; font-size: 18.5px; line-height: 31px; }
.tablist span { justify-self: start; height: 32px; }
.tablist .n { font-size: 17.8px; }
.tablist .wd { font-size: 19px; }
.active { font-weight: 600; display: flex; flex-direction: column; }
.active::after { content: ""; height: 3px; flex: none; margin: -2px -2px 0 -1px; background: #1650a8; border-radius: 2px; }
.btn { height: 36px; border-radius: 7px; display: flex; align-items: center; font-weight: 600; font-size: 18.8px; }
.comments { width: 149px; background: #fff; border: 1px solid #cfcfcf; padding-left: 11px; gap: 6px; }
.share { width: 121px; margin: 0 18px 0 12px; background: #185abd; color: #fff; font-size: 18.2px; padding-left: 10px; gap: 6px; }
.sc { margin-left: 10px; }

/* ribbon */
.ribbon { height: 150px; flex: none; margin: 0 12px; background: #fff; border-radius: 12px; box-shadow: 0 1px 5px rgba(0,0,0,.28); display: flex; padding-top: 7px; position: relative; z-index: 1; }
.group { height: 134px; flex: none; border-right: 1px solid #cdcdcd; display: flex; flex-direction: column; }
.body { height: 115px; flex: none; display: flex; }
.label { height: 24px; flex: none; display: flex; align-items: center; font-size: 14.8px; line-height: 24px; }
.launch { margin-left: auto; margin-right: 4px; }
.undo { width: 90px; }
.undo .body { flex-direction: column; padding: 0 0 0 20px; margin-top: -4px; height: 119px; }
.undo .label { padding: 2px 0 0 28px; }
.clip { width: 125px; }
.clip .label { padding-left: 16px; }
.paste { width: 80px; display: flex; flex-direction: column; padding: 2px 0 0 22px; font-size: 16.1px; }
.paste span { line-height: 22px; margin: 4px 0 6px; }
.paste svg + span + svg { margin-left: 13px; }
.col { display: flex; flex-direction: column; }
.font { width: 466px; }
.font .label { padding-left: 205px; }
.rows { flex-direction: column; padding: 11px 0 0 12px; gap: 12px; }
.row { display: flex; height: 36px; }
.sep { width: 1px; height: 36px; background: #cdcdcd; flex: none; }
.combo { height: 36px; border: 1px solid #cbcbcb; border-radius: 6px; display: flex; align-items: center; justify-content: space-between; padding-left: 2px; font-size: 17px; }
.face { width: 187px; margin-right: 3px; padding-right: 1px; }
.size { width: 64px; padding-right: 1px; font-size: 15.8px; }
.para { width: 374px; }
.para .label { padding-left: 140px; font-size: 14.4px; }
.on { background: #eaeaea; border-radius: 7px; box-shadow: inset 0 0 0 1px #707070; }
.styles { width: 541px; }
.styles .body { padding: 10px 0 0 13px; }
.styles .label { padding-left: 238px; font-size: 14.6px; }
.gallery { width: 512px; height: 91px; border: 1px solid #cbcbcb; border-radius: 6px; display: flex; color: #000; font-family: Lato, "Open Sans", sans-serif; font-size: 20.4px; }
.style { display: flex; align-items: center; justify-content: center; white-space: nowrap; padding-bottom: 2px; }
.sel { width: 162px; height: 84px; margin: 2px 0 0 1px; border: 6px solid #c3d4f2; }
.nosp { width: 163px; }
.head { width: 163px; color: #2f5496; font-weight: 300; font-size: 29.5px; }
.scroll { width: 21px; border-left: 1px solid #cbcbcb; display: flex; flex-direction: column; }
.scroll svg + svg { border-top: 1px solid #cbcbcb; }
.edit { width: 136px; }
.edit .body { flex-direction: column; }
.edit .label { padding: 2px 0 0 43px; }
.cmd { display: flex; align-items: center; height: 39px; flex: none; padding-left: 17px; }
.cmd:first-child { margin-top: -2px; }
.cmd span { margin: 0 0 1px 1px; }
.cmd .find { width: 50px; font-size: 16px; }
.cmd .select { width: 49px; font-size: 16.7px; }
.collapse { margin: 115px 0 0 133px; }

/* document */
.doc { height: 709px; flex: none; overflow: hidden; display: flex; padding-left: 335px; border-bottom: 1px solid #fff; }
.page { width: 1224px; background: #fff; border: solid #c6c6c6; border-width: 0 1px; padding-left: 187px; }
.work { border-collapse: collapse; table-layout: fixed; width: 848px; color: #000; font: 26px/32px "Liberation Serif", "Times New Roman", serif; }
.work th, .work td { border: 1px solid #000; padding: 0 0 0 11px; height: 171px; vertical-align: top; white-space: nowrap; }
.work th:first-child, .work .who { width: 360px; text-align: center; padding: 0; }
.work .hd th { height: 15px; border-top: 0; padding: 0; text-align: left; }
/* the heading line is scrolled up behind the ribbon */
.work .hd div { height: 15px; overflow: hidden; padding-left: 130px; }
.work .hd b { display: block; margin-top: -27px; letter-spacing: .6px; }
.work u { text-decoration: none; vertical-align: -3px; line-height: 0; letter-spacing: .6px; }
.work .last td { height: 174px; }

/* status bar */
.status { height: 32px; flex: none; background: #f4f4f4; display: flex; align-items: center; padding-left: 11px; font-size: 15.3px; }
.status span { margin-bottom: 1px; }
.pg { width: 113px; }
.words { width: 108px; }
.status .acc { margin-left: 3px; width: 1130px; font-size: 14.9px; }
.status .focus { margin-left: 3px; width: 55px; font-size: 14.4px; }
.views { display: flex; }
.cur { background: #e0e0e0; }
.status .pct { margin-left: 14px; font-size: 14.9px; }

/* taskbar */
.taskbar { height: 72px; flex: none; display: flex; align-items: center; background: linear-gradient(90deg, #d5def3, #d4dff4 60%, #d3dff6); box-shadow: inset 0 2px #c6d1e6; color: #1b1b1b; }
.weather { width: 564px; padding-left: 29px; display: flex; gap: 10px; }
.weather p { line-height: 24px; white-space: nowrap; }
.weather div { margin-top: 0; }
.temp { font-size: 16.6px; }
.desc { font-size: 17.5px; color: #555a66; }
.apps { display: flex; width: 910px; }
.tray { display: flex; align-items: center; background: #d4dff5; height: 72px; flex: 1; }
.eng { margin-left: 11px; width: 59px; font-size: 16.2px; }
.clock { width: 100px; text-align: right; line-height: 24px; font-size: 16.2px; margin-top: -1px; }
.notif { margin-left: 7px; width: 30px; height: 25px; border-radius: 13px; background: #0078d4; color: #fff; font-size: 15px; line-height: 25px; text-align: center; }
```
